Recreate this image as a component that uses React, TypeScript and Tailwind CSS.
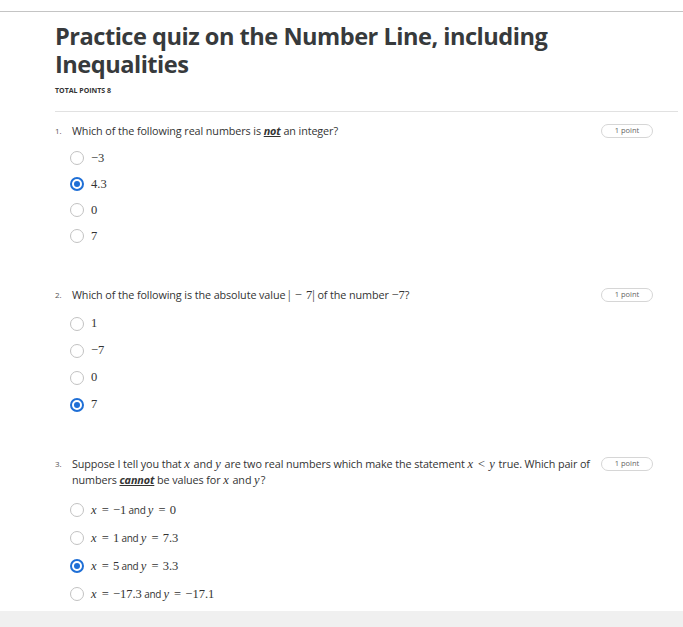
import React from 'react';

type Part = string | { m: string } | { b: string };

const math = (s: string) => ({ m: s });

const questions: {
  n: number;
  text: Part[][];
  options: Part[][];
  checked: number;
  rowH: string;
  optTop: string;
}[] = [
  {
    n: 1,
    text: [['Which of the following real numbers is ', { b: 'not' }, ' an integer?']],
    options: [[math('−3')], [math('4.3')], [math('0')], [math('7')]],
    checked: 1,
    rowH: 'h-[26px]',
    optTop: 'mt-[6px]',
  },
  {
    n: 2,
    text: [['Which of the following is the absolute value ', math('|\u2004−\u20047|'), ' of the number ', math('−7'), '?']],
    options: [[math('1')], [math('−7')], [math('0')], [math('7')]],
    checked: 3,
    rowH: 'h-[27px]',
    optTop: 'mt-[7px]',
  },
  {
    n: 3,
    text: [
      [
        'Suppose I tell you that ',
        math('x'),
        ' and ',
        math('y'),
        ' are two real numbers which make the statement ',
        math('x < y'),
        ' true. Which pair of',
      ],
      ['numbers ', { b: 'cannot' }, ' be values for ', math('x'), ' and ', math('y'), '?'],
    ],
    options: [
      [math('x = −1'), ' and ', math('y = 0')],
      [math('x = 1'), ' and ', math('y = 7.3')],
      [math('x = 5'), ' and ', math('y = 3.3')],
      [math('x = −17.3'), ' and ', math('y = −17.1')],
    ],
    checked: 2,
    rowH: 'h-[28px]',
    optTop: 'mt-[8px]',
  },
];

function MathText({ s }: { s: string }) {
  // italic letters, upright digits, KaTeX-ish spacing around relations
  const pieces = s.split(/([a-z])/);
  return (
    <span className="font-['Liberation_Serif','DejaVu_Serif',serif] text-[12.5px] tracking-normal text-[#333]">
      {pieces.map((p, i) =>
        /^[a-z]$/.test(p) ? (
          <i key={i} className="pr-[1px]">
            {p}
          </i>
        ) : (
          <span key={i} className="whitespace-pre">
            {p.replace(/ ([=<]) /g, '\u2004$1\u2004')}
          </span>
        )
      )}
    </span>
  );
}

function Render({ parts }: { parts: Part[] }) {
  return (
    <>
      {parts.map((p, i) =>
        typeof p === 'string' ? (
          <span key={i}>{p}</span>
        ) : 'm' in p ? (
          <MathText key={i} s={p.m} />
        ) : (
          <b key={i} className="italic underline underline-offset-1">
            {p.b}
          </b>
        )
      )}
    </>
  );
}

function Radio({ on }: { on: boolean }) {
  return on ? (
    <span className="flex h-[14px] w-[14px] items-center justify-center rounded-full border-2 border-[#1f6fd6]">
      <span className="h-[6px] w-[6px] rounded-full bg-[#1f6fd6]" />
    </span>
  ) : (
    <span className="h-[14px] w-[14px] rounded-full border border-[#c2c2c2]" />
  );
}

export default function App() {
  return (
    <div className="min-h-[627px] bg-white font-['Open_Sans',sans-serif] text-[#333]">
      <div className="h-[12px] border-b border-[#c4c4c4]" />
      <div className="pl-[55px] pr-[5px]">
        <h1 className="mt-[10px] w-[580px] text-[23.6px] font-bold leading-[28px] tracking-[-0.5px] text-[#373a3c]">
          Practice quiz on the Number Line, including Inequalities
        </h1>
        <div className="mt-[7px] text-[7px] font-bold uppercase leading-[12px] text-[#333]">Total points 8</div>
        <div className="mt-[14px] border-t border-[#e1e1e1]" />

        <div className="pr-[25px]">
          {questions.map((q, qi) => (
            <div key={q.n} className={qi === 0 ? 'mt-[11px]' : 'mt-[38px]'}>
              <div className="flex items-start">
                <span className="w-[17px] pt-[1px] text-[8px] leading-[14px] text-[#555]">{q.n}.</span>
                <div className="flex-1 text-[10.8px] leading-[16px] tracking-[-0.1px] text-[#333]">
                  {q.text.map((line, li) => (
                    <div key={li} className="whitespace-nowrap">
                      <Render parts={line} />
                    </div>
                  ))}
                </div>
                <span className="mt-[1px] flex h-[14px] w-[52px] shrink-0 items-center justify-center rounded-full border border-[#d6d6d6] text-[7.5px] text-[#666]">
                  1 point
                </span>
              </div>
              <div className={`${q.optTop} pl-[15px]`}>
                {q.options.map((o, oi) => (
                  <div key={oi} className={`flex ${q.rowH} items-center gap-[7px] text-[10px] tracking-[-0.3px]`}>
                    <Radio on={oi === q.checked} />
                    <span className="whitespace-nowrap">
                      <Render parts={o} />
                    </span>
                  </div>
                ))}
              </div>
            </div>
          ))}
        </div>
      </div>
      <div className="mt-[3px] h-[20px] bg-[#f0f0f0]" />
    </div>
  );
}
